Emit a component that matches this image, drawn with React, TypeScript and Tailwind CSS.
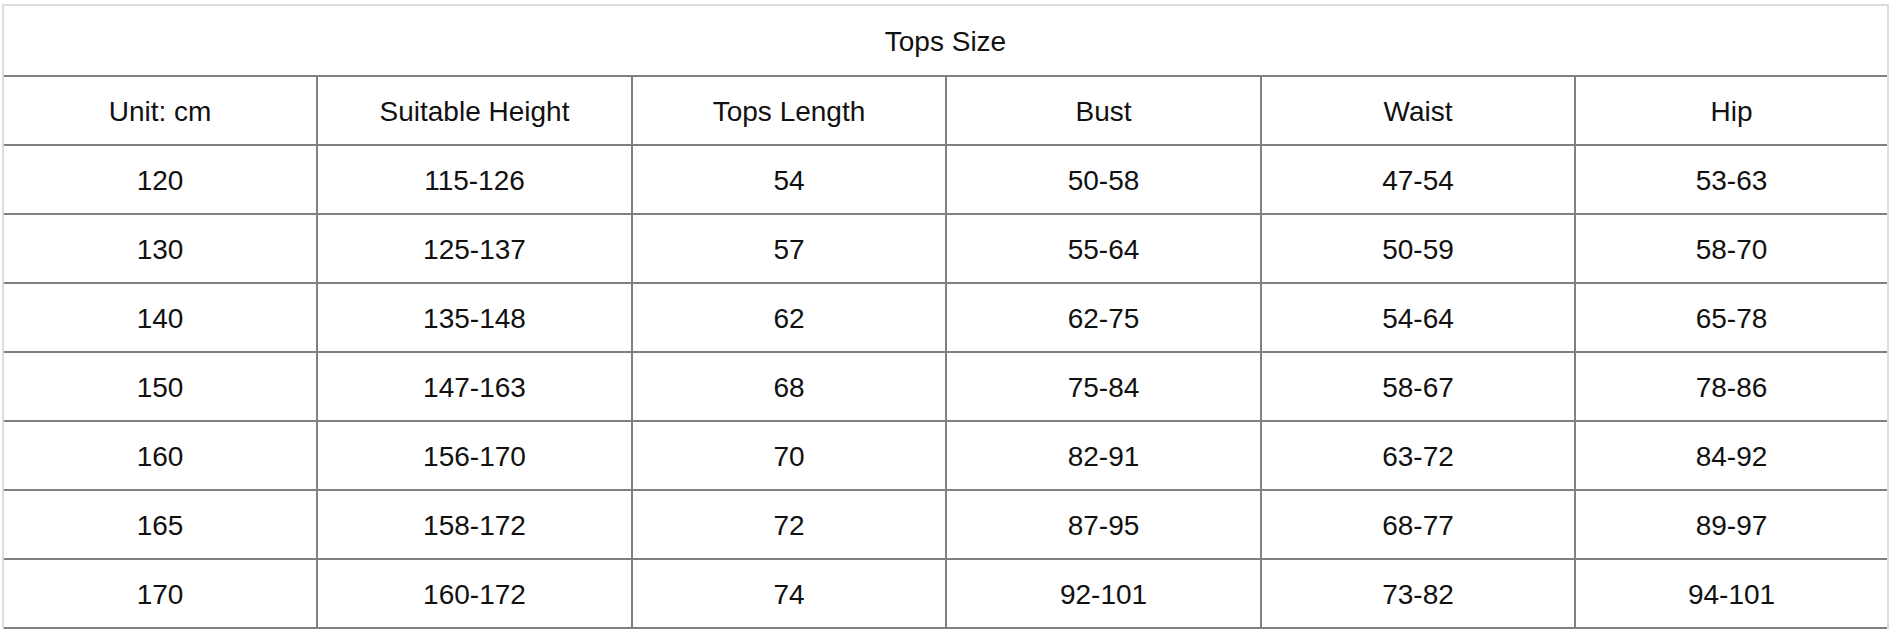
import React from "react";

const header = ["Unit: cm", "Suitable Height", "Tops Length", "Bust", "Waist", "Hip"];
const rows = [
  ["120", "115-126", "54", "50-58", "47-54", "53-63"],
  ["130", "125-137", "57", "55-64", "50-59", "58-70"],
  ["140", "135-148", "62", "62-75", "54-64", "65-78"],
  ["150", "147-163", "68", "75-84", "58-67", "78-86"],
  ["160", "156-170", "70", "82-91", "63-72", "84-92"],
  ["165", "158-172", "72", "87-95", "68-77", "89-97"],
  ["170", "160-172", "74", "92-101", "73-82", "94-101"],
];

function Row({ cells }: { cells: string[] }) {
  return (
    <div className="grid grid-cols-[314px_315px_314px_315px_314px_1fr] h-[69px] border-b-2 border-[#808080]">
      {cells.map((c, i) => (
        <div
          key={i}
          className={
            i < cells.length - 1
              ? "flex items-center justify-center pt-[2px] border-r-2 border-[#808080]"
              : "flex items-center justify-center pt-[2px]"
          }
        >
          {c}
        </div>
      ))}
    </div>
  );
}

export default function App() {
  return (
    <div className="w-[1890px] h-[634px] bg-white overflow-hidden pt-[4px] pl-[2px] pr-[1px]">
      <div
        className="border-t-2 border-l-2 border-r-2 border-[#dcdcdc] text-[28px] text-[#111]"
        style={{ fontFamily: '"Liberation Sans", Arial, sans-serif' }}
      >
        <div className="h-[71px] flex items-center justify-center pt-[2px] border-b-2 border-[#808080]">
          Tops Size
        </div>
        <Row cells={header} />
        {rows.map((r, i) => (
          <Row key={i} cells={r} />
        ))}
      </div>
    </div>
  );
}
